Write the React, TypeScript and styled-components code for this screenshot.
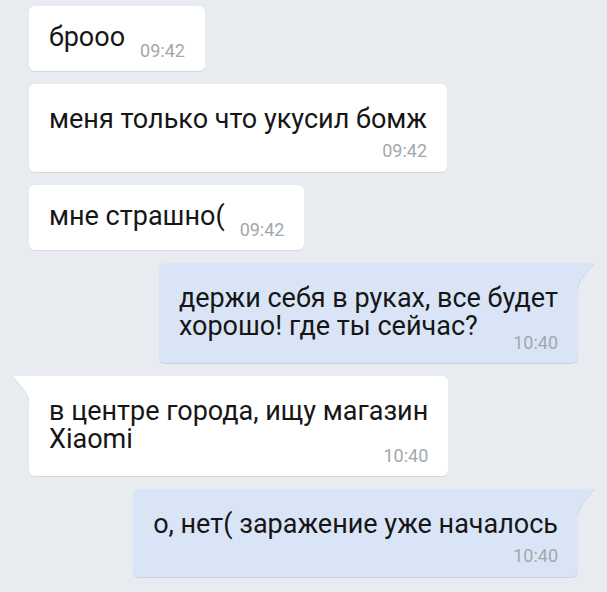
import React from "react";
import styled, { createGlobalStyle, css } from "styled-components";

type Variant = "side" | "end" | "below";

interface Message {
  text: string;
  time: string;
  out?: boolean;
  tail?: boolean;
  variant: Variant;
}

const messages: Message[] = [
  { text: "брооо", time: "09:42", variant: "side" },
  { text: "меня только что укусил бомж", time: "09:42", variant: "below" },
  { text: "мне страшно(", time: "09:42", variant: "side" },
  {
    text: "держи себя в руках, все будет\nхорошо! где ты сейчас?",
    time: "10:40",
    out: true,
    tail: true,
    variant: "end",
  },
  {
    text: "в центре города, ищу магазин\nXiaomi",
    time: "10:40",
    tail: true,
    variant: "end",
  },
  {
    text: "о, нет( заражение уже началось",
    time: "10:40",
    out: true,
    tail: true,
    variant: "below",
  },
];

const GlobalStyle = createGlobalStyle`
  html, body {
    margin: 0;
    padding: 0;
    background: #e8ecf1;
  }
  body {
    font-family: Roboto, "Noto Sans", "Liberation Sans", sans-serif;
    -webkit-font-smoothing: antialiased;
  }
`;

const Screen = styled.div`
  box-sizing: border-box;
  width: 607px;
  height: 592px;
  overflow: hidden;
  background: #e8ecf1;
  padding: 6px 29px 0;
  display: flex;
  flex-direction: column;
  gap: 13px;
`;

const Row = styled.div<{ $out?: boolean }>`
  display: flex;
  justify-content: ${(p) => (p.$out ? "flex-end" : "flex-start")};
`;

const Bubble = styled.div<{ $out?: boolean; $tail?: boolean; $variant: Variant }>`
  position: relative;
  display: flow-root;
  box-sizing: border-box;
  padding: ${(p) => (p.$variant === "side" ? "17px" : "21px")} 20px 14px 20px;
  border-radius: 6px;
  background: ${(p) => (p.$out ? "#d9e5f6" : "#ffffff")};
  box-shadow: 0 1px 0 ${(p) => (p.$out ? "#c6d3e5" : "#d4d9df")};
  ${(p) =>
    p.$tail &&
    (p.$out
      ? css`
          border-top-right-radius: 0;
        `
      : css`
          border-top-left-radius: 0;
        `)}
`;

const Tail = styled.svg<{ $out?: boolean }>`
  position: absolute;
  top: 0;
  width: 18px;
  height: 26px;
  ${(p) =>
    p.$out
      ? css`
          right: -17px;
        `
      : css`
          left: -17px;
          transform: scaleX(-1);
        `}
`;

const Text = styled.p`
  margin: 0;
  font-size: 27px;
  line-height: 28px;
  color: #161616;
  white-space: pre-line;
`;

const Time = styled.span<{ $variant: Variant }>`
  font-size: 18px;
  line-height: 12px;
  font-weight: 400;
  color: #a3a7ac;
  white-space: nowrap;
  ${(p) =>
    p.$variant === "below"
      ? css`
          display: block;
          text-align: right;
          margin: 12px 0 1px;
        `
      : css`
          float: right;
          margin: ${p.$variant === "side" ? "22px" : "25px"} 0 0 15px;
        `}
`;

function BubbleTail({ out }: { out?: boolean }) {
  const fill = out ? "#d9e5f6" : "#ffffff";
  const edge = out ? "#c9d6e8" : "#dde1e6";
  return (
    <Tail $out={out} viewBox="0 0 18 26">
      <path d="M0 0 H17 C14.5 3.5 8 11 4.5 16.5 C2.2 20 1 22.5 1 26 H0 Z" fill={fill} />
      <path
        d="M17 0.5 C14.5 3.8 8 11 4.5 16.5 C2.2 20 1 22.5 1 26"
        fill="none"
        stroke={edge}
        strokeWidth="1"
      />
    </Tail>
  );
}

export default function App() {
  return (
    <>
      <GlobalStyle />
      <Screen>
        {messages.map((m, i) => (
          <Row key={i} $out={m.out}>
            <Bubble $out={m.out} $tail={m.tail} $variant={m.variant}>
              {m.tail && <BubbleTail out={m.out} />}
              <Text>
                {m.text}
                {m.variant !== "below" && <Time $variant={m.variant}>{m.time}</Time>}
              </Text>
              {m.variant === "below" && <Time $variant="below">{m.time}</Time>}
            </Bubble>
          </Row>
        ))}
      </Screen>
    </>
  );
}
